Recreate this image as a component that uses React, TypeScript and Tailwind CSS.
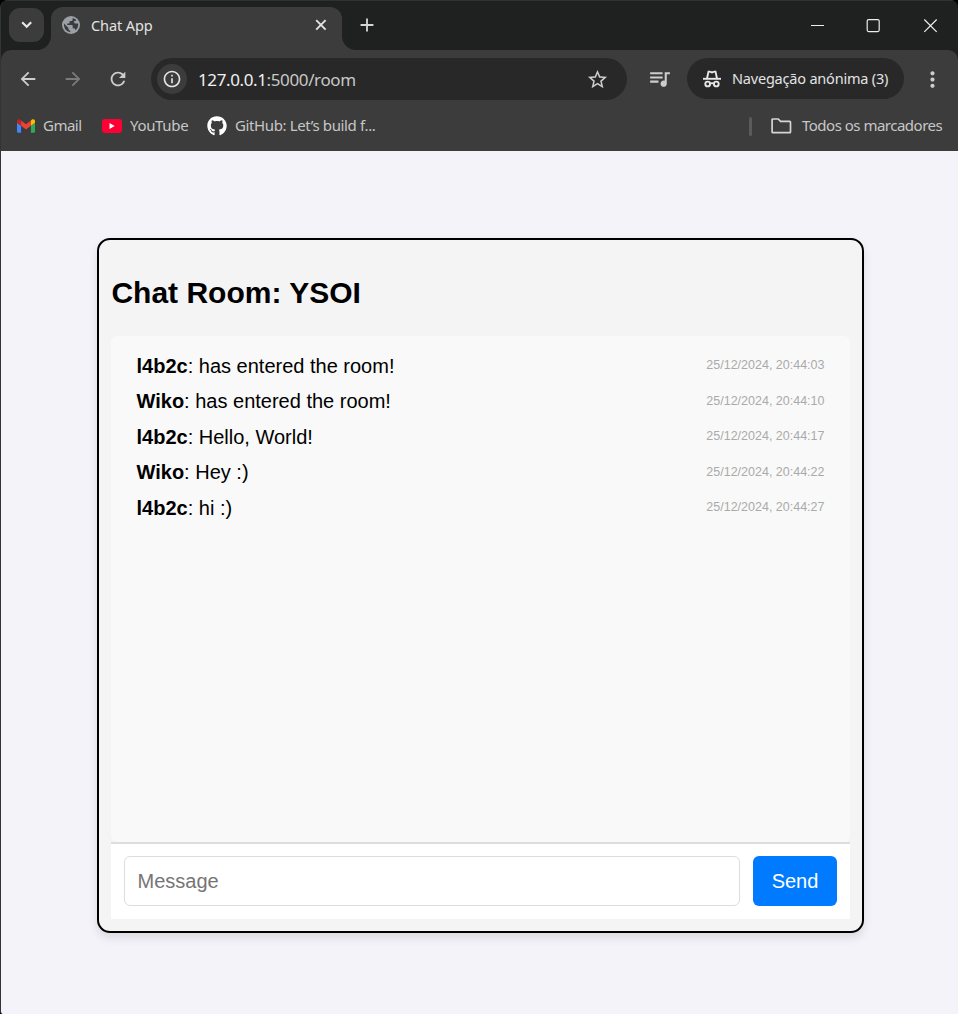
import React from "react";
import { MdArrowBack, MdArrowForward, MdRefresh, MdStarBorder, MdQueueMusic, MdMoreVert, MdInfoOutline, MdAdd } from "react-icons/md";
import { FaGithub } from "react-icons/fa";

const ui = "font-['Noto_Sans',sans-serif]";

const messages = [
  { name: "l4b2c", text: "has entered the room!", time: "25/12/2024, 20:44:03" },
  { name: "Wiko", text: "has entered the room!", time: "25/12/2024, 20:44:10" },
  { name: "l4b2c", text: "Hello, World!", time: "25/12/2024, 20:44:17" },
  { name: "Wiko", text: "Hey :)", time: "25/12/2024, 20:44:22" },
  { name: "l4b2c", text: "hi :)", time: "25/12/2024, 20:44:27" },
];

function Globe() {
  return (
    <svg width="18" height="18" viewBox="0 0 18 18" className="shrink-0">
      <circle cx="9" cy="9" r="9" fill="#9aa0a6" />
      <path d="M10.6 1.9v1.8q0 1.4-1.4 1.4H7.6v1.6q0 .8-.9.8H5.2v1.4h4.6q.9 0 .9.9v2.4h1q1.1 0 1.5 1.1l.3 1A7.2 7.2 0 0 0 16.2 9q0-.8-.2-1.5h-2.3q-1.6 0-1.6-1.6V5h1.2q.8 0 .8-.9v-.4A7.2 7.2 0 0 0 10.6 1.9Z" fill="#3c3c3c" />
      <path d="M2 7.6 6.5 12v.9q0 1.6 1.7 1.6v1.7A7.2 7.2 0 0 1 2 7.6Z" fill="#3c3c3c" />
    </svg>
  );
}

function Gmail() {
  return (
    <svg width="18" height="14" viewBox="52 42 88 66" className="shrink-0">
      <path fill="#4285f4" d="M58 108h14V74L52 59v43c0 3.32 2.69 6 6 6" />
      <path fill="#34a853" d="M120 108h14c3.32 0 6-2.69 6-6V59l-20 15" />
      <path fill="#fbbc04" d="M120 48v26l20-15v-8c0-7.42-8.47-11.65-14.4-7.2" />
      <path fill="#ea4335" d="M72 74V48l24 18 24-18v26L96 92" />
      <path fill="#c5221f" d="M52 51v8l20 15V48l-5.6-4.2c-5.94-4.45-14.4-.22-14.4 7.2" />
    </svg>
  );
}

function Incognito() {
  return (
    <svg width="20" height="18" viewBox="0 0 20 18" fill="none" stroke="#e8e8e8" strokeWidth="1.9" className="shrink-0">
      <path d="M1 8.8h18" />
      <path d="M5 8.5 6.5 1.6h1.2l2.3.8 2.3-.8h1.2l1.5 6.9" />
      <circle cx="5.7" cy="14" r="2.4" />
      <circle cx="14.3" cy="14" r="2.4" />
      <path d="M8 13.6q2-1 4 0" />
    </svg>
  );
}

function TitleBar() {
  return (
    <div className="flex h-[50px] border-t border-[#303231] bg-[#1f2120]">
      <div className="z-10 mt-[7px] ml-[8px] flex h-[34px] w-[35px] items-center justify-center rounded-[11px] bg-[#3c3c3c]">
        <svg width="12" height="8" viewBox="0 0 12 8" fill="none" stroke="#e8e8e8" strokeWidth="2.2">
          <path d="m1.2 1.3 4.5 4.4 4.5-4.4" />
        </svg>
      </div>
      <div className="mt-[6px] ml-[-7px] flex h-[43px]">
        <div className="w-[14px] self-end bg-[#3c3c3c]">
          <div className="h-[14px] rounded-br-[14px] bg-[#1f2120]" />
        </div>
        <div className="flex w-[291px] rounded-t-[12px] bg-[#3c3c3c] pt-[9px] pl-[11px]">
          <Globe />
          <span className={`${ui} ml-[11px] h-[20px] w-[224px] text-[14.5px] leading-[19px] tracking-[-0.1px] text-[#e3e3e3]`}>Chat App</span>
          <svg width="12" height="12" viewBox="0 0 12 12" fill="none" stroke="#e3e3e3" strokeWidth="1.9" className="mt-[3px]">
            <path d="m1.2 1.2 9.4 9.4m0-9.4-9.4 9.4" />
          </svg>
        </div>
        <div className="w-[14px] self-end bg-[#3c3c3c]">
          <div className="h-[14px] rounded-bl-[14px] bg-[#1f2120]" />
        </div>
      </div>
      <MdAdd className="mt-[13px] size-[22px] text-[#d5d5d5]" />
      <div className="ml-auto flex items-center pr-[20px] pb-px">
        <svg width="130" height="16" viewBox="0 0 130 16" fill="none" stroke="#ededed" strokeWidth="1.2">
          <path d="M3 8.5h13" strokeWidth="1" />
          <rect x="59.2" y="2.6" width="12" height="12" rx="1.5" />
          <path d="m116.3 2.5 12.4 12.4m0-12.4-12.4 12.4" />
        </svg>
      </div>
    </div>
  );
}

function Toolbar() {
  return (
    <div className="flex h-[58px] items-center rounded-t-[10px] bg-[#3c3c3c] text-[#cdcdcd]">
      <MdArrowBack className="ml-[16px] size-[22px] shrink-0" />
      <MdArrowForward className="ml-[23px] size-[22px] shrink-0 text-[#7b7b7b]" />
      <MdRefresh className="ml-[23px] size-[22px] shrink-0" />
      <div className="ml-[22px] flex h-[42px] w-[476px] shrink-0 items-center rounded-full bg-[#282828] pl-[6px]">
        <div className="flex size-[30px] items-center justify-center rounded-full bg-[#3c3c3c]">
          <MdInfoOutline className="size-[20px] text-[#e3e3e3]" />
        </div>
        <span className={`${ui} mt-px ml-[11px] text-[17px] leading-[24px] tracking-[-0.38px] text-[#c7c7c7]`}>
          <span className="text-[#f0f0f0]">127.0.0.1</span>:5000/room
        </span>
        <MdStarBorder className="mr-[18px] ml-auto size-[23px]" />
      </div>
      <MdQueueMusic className="mb-[2px] ml-[20px] size-[25px] shrink-0" />
      <div className="mb-px ml-[15px] flex h-[41px] w-[217px] shrink-0 items-center rounded-full bg-[#282828] pl-[15px]">
        <Incognito />
        <span className={`${ui} ml-[10px] whitespace-nowrap text-[14.5px] tracking-[-0.2px] text-[#e3e3e3]`}>Navegação anónima (3)</span>
      </div>
      <MdMoreVert className="ml-[16px] size-[25px] shrink-0" />
    </div>
  );
}

function Bookmarks() {
  return (
    <div className={`${ui} flex h-[43px] items-center bg-[#3c3c3c] pb-[7px] pl-[16px] text-[15px] leading-[20px] tracking-[-0.33px] whitespace-nowrap text-[#c7c7c7]`}>
      <Gmail />
      <span className="mb-[2px] ml-[8px] w-[39px] tracking-[-0.5px]">Gmail</span>
      <div className="ml-[20px] flex h-[14px] w-[20px] items-center justify-center rounded-[3px] bg-[#ff0033]">
        <svg width="6" height="6" viewBox="0 0 6 6"><path d="M.5 0 5.7 3 .5 6Z" fill="#fff" /></svg>
      </div>
      <span className="mb-[2px] ml-[8px] w-[57px]">YouTube</span>
      <FaGithub className="ml-[20px] size-[20px] text-white" />
      <span className="mb-[2px] ml-[8px] tracking-[-0.37px]">GitHub: Let’s build f...</span>
      <span className="mr-[19px] ml-auto h-[19px] w-[3px] rounded-full bg-[#5b5b5b]" />
      <svg width="21" height="16" viewBox="0 0 21 16" fill="none" stroke="#d5d5d5" strokeWidth="1.7">
        <path d="M1.9 1h5.4l2.2 2.4h9.2q.8 0 .8.8v9.7q0 .8-.8.8H1.9q-.8 0-.8-.8V1.8q0-.8.8-.8Z" />
      </svg>
      <span className="mr-[16px] mb-[2px] ml-[10px] w-[140px] tracking-[-0.5px]">Todos os marcadores</span>
    </div>
  );
}

function ChatRoom() {
  return (
    <main className="flex-1 bg-[#f4f3f9] pt-[87px] pl-[96px] font-['Liberation_Sans',Arial,sans-serif] text-black">
      <section className="flex h-[695px] w-[767px] flex-col rounded-[13px] border-2 border-black bg-[#f4f4f4] px-[12px] pb-[12px] shadow-[0_5px_10px_rgba(0,0,0,0.1)]">
        <h2 className="mt-[35px] h-[61px] pl-[0.4px] text-[30px] leading-[35px] font-bold">Chat Room: YSOI</h2>
        <div className="flex h-[506px] flex-col gap-[12.5px] rounded-[6px] bg-[#f9f9f9] px-[25.5px] pt-[18.9px]">
          {messages.map((m) => (
            <div key={m.time} className="flex h-[23px] justify-between text-[20px] leading-[23px]">
              <span><strong>{m.name}</strong>: {m.text}</span>
              <time className="mt-[-0.8px] text-[12.5px] text-[#aaa]">{m.time}</time>
            </div>
          ))}
        </div>
        <form className="flex flex-1 gap-[13px] border-t-2 border-[#ddd] bg-white px-[13px] pt-[12px]" onSubmit={(e) => e.preventDefault()}>
          <input placeholder="Message" className="h-[50px] w-[616px] rounded-[6px] border border-[#ddd] px-[12.5px] text-[20px] outline-none placeholder:text-[#757575]" />
          <button type="submit" className="h-[50px] w-[84px] rounded-[6px] bg-[#007bff] text-[20px] text-white">Send</button>
        </form>
      </section>
    </main>
  );
}

export default function App() {
  return (
    <div className="h-[1014px] w-[958px] bg-black">
      <div className="flex h-full w-full flex-col overflow-hidden rounded-t-[8px] rounded-bl-[3px] border-l border-[#34323a] bg-[#1f2120]">
        <TitleBar />
        <Toolbar />
        <Bookmarks />
        <ChatRoom />
      </div>
    </div>
  );
}
